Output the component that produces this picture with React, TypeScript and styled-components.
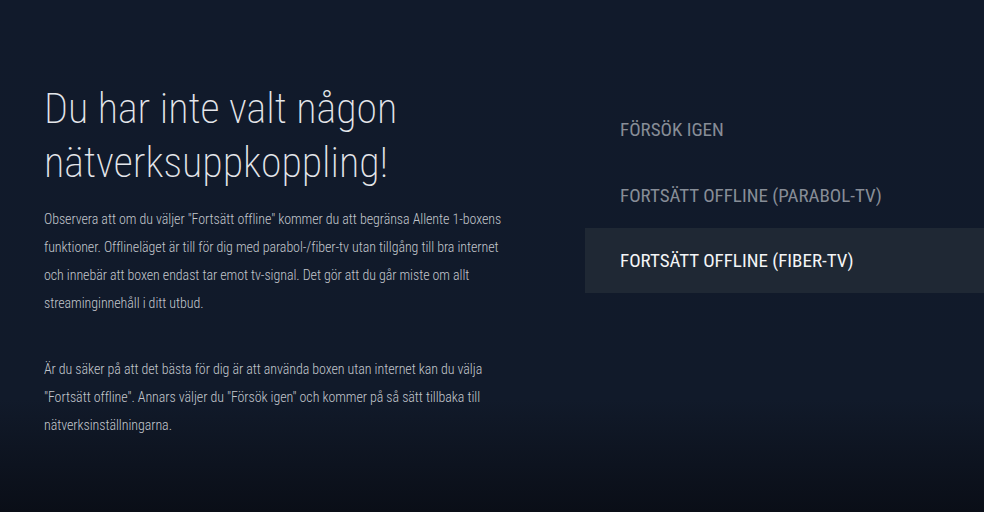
import styled, { createGlobalStyle } from 'styled-components';

const Global = createGlobalStyle`
  html, body {
    margin: 0;
    padding: 0;
  }
  body {
    font-family: Roboto, 'Noto Sans', sans-serif;
    background: #111a2b;
  }
`;

type Option = {
  label: string;
  focused?: boolean;
};

const options: Option[] = [
  { label: 'FÖRSÖK IGEN' },
  { label: 'FORTSÄTT OFFLINE (PARABOL-TV)' },
  { label: 'FORTSÄTT OFFLINE (FIBER-TV)', focused: true },
];

// lines are broken by hand, the way the box renders them
const firstParagraph = [
  'Observera att om du väljer "Fortsätt offline" kommer du att begränsa Allente 1-boxens',
  'funktioner. Offlineläget är till för dig med parabol-/fiber-tv utan tillgång till bra internet',
  'och innebär att boxen endast tar emot tv-signal. Det gör att du går miste om allt',
  'streaminginnehåll i ditt utbud.',
];

const secondParagraph = [
  'Är du säker på att det bästa för dig är att använda boxen utan internet kan du välja',
  '"Fortsätt offline". Annars väljer du "Försök igen" och kommer på så sätt tillbaka till',
  'nätverksinställningarna.',
];

const App = () => {
  return (
    <>
      <Global />
      <Screen>
        <Message>
          <Title>
            Du har inte valt någon
            <br />
            nätverksuppkoppling!
          </Title>
          <Paragraph>
            {firstParagraph.map((line, index) => (
              <Line key={index}>{line}</Line>
            ))}
          </Paragraph>
          <Paragraph $spaced>
            {secondParagraph.map((line, index) => (
              <Line key={index}>{line}</Line>
            ))}
          </Paragraph>
        </Message>

        <Menu>
          {options.map(option => (
            <MenuItem key={option.label} $focused={option.focused}>
              {option.label}
            </MenuItem>
          ))}
        </Menu>
      </Screen>
    </>
  );
};

const Screen = styled.div`
  display: flex;
  width: 984px;
  height: 512px;
  overflow: hidden;
  background: linear-gradient(
    to bottom,
    #111a2b 0%,
    #111a2a 78%,
    #0a0e17 100%
  );
`;

const Message = styled.div`
  display: flex;
  flex-direction: column;
  flex: none;
  width: 585px;
  padding: 82px 0 0 44px;
  box-sizing: border-box;
`;

const Title = styled.h1`
  margin: 0;
  font-family: Roboto, sans-serif;
  font-stretch: condensed;
  font-weight: 200;
  font-size: 42px;
  line-height: 54px;
  color: #e4e6ea;
  white-space: nowrap;
`;

const Paragraph = styled.p<{ $spaced?: boolean }>`
  margin: ${p => (p.$spaced ? '38px' : '15px')} 0 0 0;
  font-family: Roboto, sans-serif;
  font-stretch: condensed;
  font-weight: 300;
  font-size: 14px;
  letter-spacing: -0.07px;
  line-height: 28px;
  color: #c3c7cd;
`;

const Line = styled.span`
  display: block;
  white-space: nowrap;
`;

const Menu = styled.div`
  display: flex;
  flex-direction: column;
  flex: 1;
  padding-top: 96px;
`;

const MenuItem = styled.div<{ $focused?: boolean }>`
  display: flex;
  align-items: center;
  height: 66px;
  padding-left: 35px;
  font-family: Roboto, sans-serif;
  font-stretch: condensed;
  font-weight: 400;
  font-size: 19px;
  color: ${p => (p.$focused ? '#f4f5f7' : '#878d97')};
  background: ${p => (p.$focused ? '#1f2834' : 'transparent')};
  white-space: nowrap;

  &:last-child {
    height: 65px;
  }
`;

export default App;
